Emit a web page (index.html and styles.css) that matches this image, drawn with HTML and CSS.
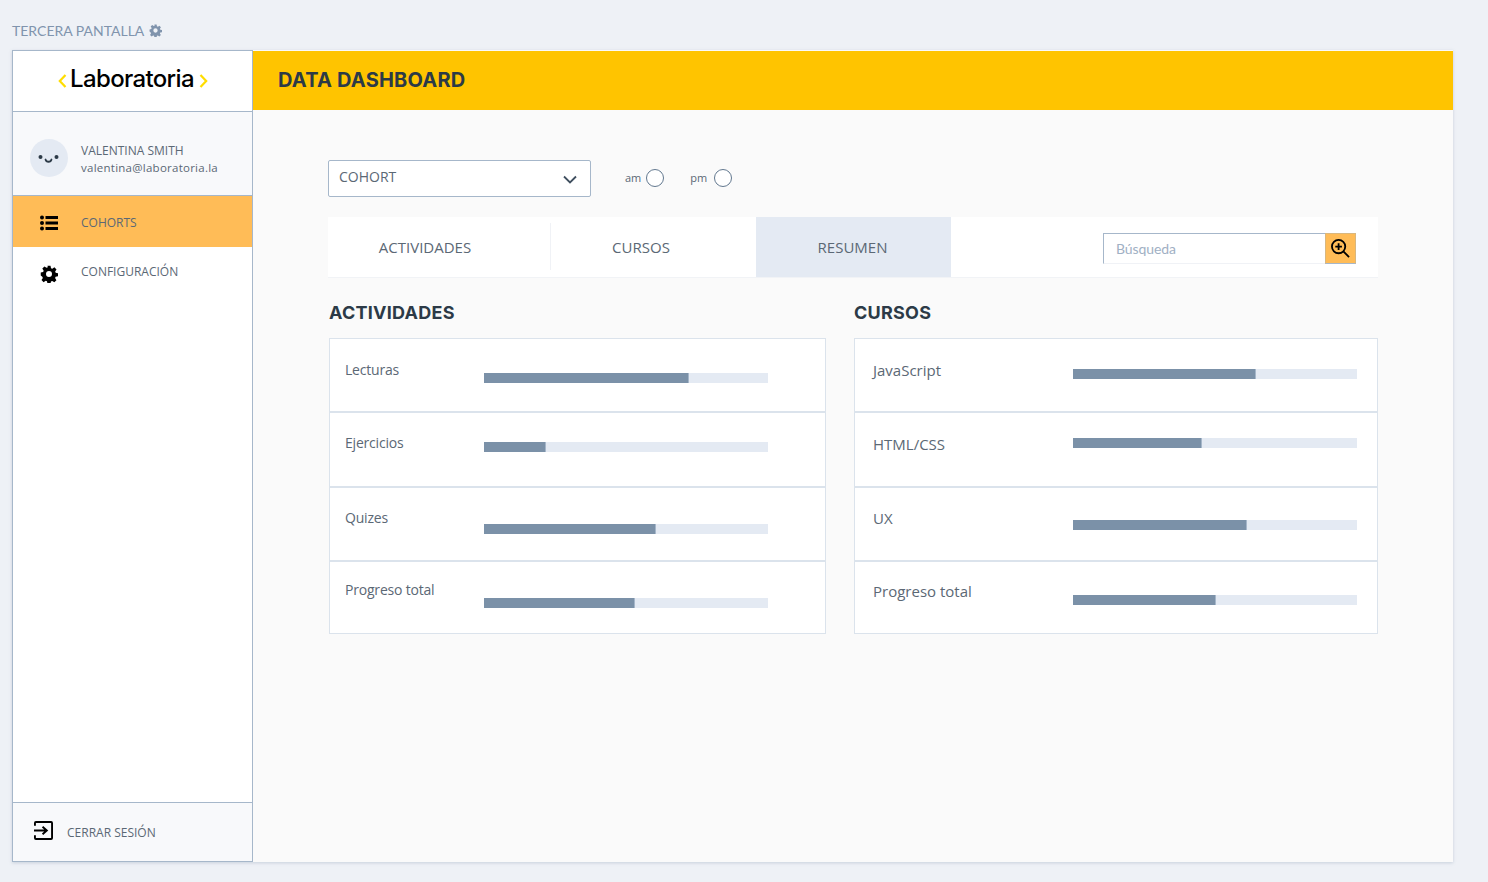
FILE: index.html
```html
<!DOCTYPE html>
<html lang="es">
<head>
    <meta charset="UTF-8">
    <title>Data Dashboard</title>
    <link rel="stylesheet" href="styles.css">
</head>
<body>
    <p class="screen-title">TERCERA PANTALLA
        <svg class="screen-gear" viewBox="0 0 24 24"><use href="#gear"/></svg>
    </p>
    <svg class="defs" width="0" height="0">
        <symbol id="gear" viewBox="0 0 24 24">
            <path fill-rule="evenodd" d="M10 1h4l.7 3.2 1.7.7 2.8-1.8 2.8 2.8-1.8 2.8.7 1.7 3.1.6v4l-3.2.7-.7 1.7 1.8 2.8-2.8 2.8-2.8-1.8-1.7.7-.6 3.1h-4l-.7-3.2-1.7-.7-2.8 1.8-2.8-2.8 1.8-2.8-.7-1.7L1 14v-4l3.200-.7.7-1.700-1.800-2.800 2.800-2.800 2.800 1.800 1.700-.7zM12 8a4 4 0 1 0 0 8 4 4 0 0 0 0-8z"/>
        </symbol>
    </svg>
    <div class="frame">
        <aside class="sidebar">
            <div class="logo">
                <svg class="logo-mark" viewBox="0 0 9 14" fill="none" stroke="#ffdd00" stroke-width="2.200"><path d="M7.500 1L1.800 7l5.700 6"/></svg>
                Laboratoria
                <svg class="logo-mark logo-mark-right" viewBox="0 0 9 14" fill="none" stroke="#ffdd00" stroke-width="2.200"><path d="M1.500 1l5.700 6-5.700 6"/></svg>
            </div>
            <div class="profile">
                <svg class="avatar" viewBox="0 0 38 38">
                    <circle cx="19" cy="19" r="19" fill="#e4eaf3"/>
                    <circle cx="10.500" cy="18" r="2" fill="#2c3a47"/>
                    <circle cx="26.500" cy="18" r="2" fill="#2c3a47"/>
                    <path d="M15.500 20.500c.8 3 5.200 3 6 0" fill="none" stroke="#2c3a47" stroke-width="1.800" stroke-linecap="round"/>
                </svg>
                <div class="profile-text">
                    <div>VALENTINA SMITH</div>
                    <div class="profile-mail">valentina@laboratoria.la</div>
                </div>
            </div>
            <nav class="menu">
                <a class="menu-item menu-active">
                    <svg class="menu-icon" viewBox="0 0 18 16">
                        <circle cx="2" cy="2.500" r="2"/><circle cx="2" cy="8" r="2"/><circle cx="2" cy="13.500" r="2"/>
                        <rect x="5.500" y="1" width="12.500" height="3"/><rect x="5.500" y="6.500" width="12.500" height="3"/><rect x="5.500" y="12" width="12.500" height="3"/>
                    </svg>
                    COHORTS
                </a>
                <a class="menu-item menu-config">
                    <svg class="menu-icon" viewBox="0 0 24 24"><use href="#gear"/></svg>
                    CONFIGURACIÓN
                </a>
            </nav>
            <a class="logout">
                <svg class="logout-icon" viewBox="0 0 20 20" fill="none" stroke="#000" stroke-width="2">
                    <path d="M1 5V2a1 1 0 0 1 1-1h16a1 1 0 0 1 1 1v16a1 1 0 0 1-1 1H2a1 1 0 0 1-1-1v-3"/>
                    <path d="M0 10h13M9 6l4.500 4L9 14"/>
                </svg>
                CERRAR SESIÓN
            </a>
        </aside>
        <main class="main">
            <header class="topbar">DATA DASHBOARD</header>
            <div class="content">
                <div class="filters">
                    <div class="select">COHORT
                        <svg class="chevron" viewBox="0 0 14 9" fill="none" stroke="#3f4f5f" stroke-width="1.800"><path d="M1 1.500l6 6 6-6"/></svg>
                    </div>
                    <label class="radio radio-am">am <span class="radio-dot"></span></label>
                    <label class="radio radio-pm">pm <span class="radio-dot"></span></label>
                </div>
                <div class="tabs">
                    <div class="tab tab-first">ACTIVIDADES</div>
                    <div class="tab tab-second">CURSOS</div>
                    <div class="tab tab-active">RESUMEN</div>
                    <div class="search">
                        <div class="search-input">Búsqueda</div>
                        <div class="search-btn">
                            <svg viewBox="0 0 20 20" width="19" height="19" fill="none" stroke="#000" stroke-width="1.900">
                                <circle cx="8" cy="8" r="7"/>
                                <path d="M13 13l6 6M8 4.500v7M4.500 8h7"/>
                            </svg>
                        </div>
                    </div>
                </div>
                <div class="panels">
                    <section class="panel">
                        <h3 class="panel-title">ACTIVIDADES</h3>
                        <div class="card">
                            <div class="row row-1"><span class="row-label">Lecturas</span><div class="bar"><div class="bar-fill" style="width: 72.2%"></div></div></div>
                            <div class="row row-2"><span class="row-label">Ejercicios</span><div class="bar"><div class="bar-fill" style="width: 21.8%"></div></div></div>
                            <div class="row row-3"><span class="row-label">Quizes</span><div class="bar"><div class="bar-fill" style="width: 60.6%"></div></div></div>
                            <div class="row row-4"><span class="row-label">Progreso total</span><div class="bar"><div class="bar-fill" style="width: 53.2%"></div></div></div>
                        </div>
                    </section>
                    <section class="panel panel-courses">
                        <h3 class="panel-title">CURSOS</h3>
                        <div class="card">
                            <div class="row row-1"><span class="row-label">JavaScript</span><div class="bar"><div class="bar-fill" style="width: 64.4%"></div></div></div>
                            <div class="row row-2"><span class="row-label">HTML/CSS</span><div class="bar"><div class="bar-fill" style="width: 45.4%"></div></div></div>
                            <div class="row row-3"><span class="row-label">UX</span><div class="bar"><div class="bar-fill" style="width: 61.3%"></div></div></div>
                            <div class="row row-4"><span class="row-label">Progreso total</span><div class="bar"><div class="bar-fill" style="width: 50.4%"></div></div></div>
                        </div>
                    </section>
                </div>
            </div>
        </main>
    </div>
</body>
</html>
```

FILE: styles.css
```css
/* General reset */
* {
    margin: 0;
    padding: 0;
    box-sizing: border-box;
}

body {
    height: 882px;
    overflow: hidden;
    padding: 21px 35px 0 12px;
    background: #eef1f6;
    font-family: "Open Sans", sans-serif;
    color: #5b6875;
}

.defs {
    display: block;
}

.screen-title {
    display: flex;
    align-items: center;
    gap: 5px;
    height: 18px;
    font-family: Lato, sans-serif;
    font-size: 14px;
    color: #8094ad;
}

.screen-gear {
    width: 13px;
    height: 13px;
    fill: #8094ad;
}

/* Frame */
.frame {
    display: flex;
    height: 812px;
    margin-top: 11px;
    box-shadow: 0 1px 3px rgba(128, 148, 173, 0.35);
}

/* Sidebar */
.sidebar {
    display: flex;
    flex-direction: column;
    width: 241px;
    flex: none;
    background: #fff;
    border: 1px solid #a6b7ca;
}

.logo {
    display: flex;
    align-items: center;
    justify-content: center;
    gap: 3px;
    height: 61px;
    padding: 0 0 6px 1px;
    border-bottom: 1px solid #a6b7ca;
    font-family: Inter, sans-serif;
    font-weight: 500;
    font-size: 24px;
    letter-spacing: -0.65px;
    color: #000;
}

.logo-mark {
    width: 9px;
    height: 14px;
    margin-top: 6px;
}

.logo-mark-right {
    margin-left: 2px;
}

.profile {
    display: flex;
    align-items: center;
    height: 84px;
    padding: 8px 0 0 17px;
    background: #f8f9fb;
    border-bottom: 1px solid #a6b7ca;
    font-size: 12px;
    line-height: 18px;
}

.avatar {
    width: 38px;
    height: 38px;
    margin-right: 13px;
}

.profile-text {
    margin-top: 4px;
}

.profile-mail {
    margin-top: -1px;
    font-size: 11.500px;
    letter-spacing: 0.25px;
}

.menu {
    flex: 1;
}

.menu-item {
    display: flex;
    align-items: center;
    height: 51px;
    padding-left: 27px;
    font-size: 12px;
}

.menu-active {
    padding-top: 2px;
    background: #ffbc57;
}

.menu-config {
    padding-bottom: 2px;
}

.menu-icon {
    width: 18px;
    height: 18px;
    margin-right: 23px;
    fill: #000;
}

.menu-config .menu-icon {
    margin-top: 5px;
}

.logout {
    display: flex;
    align-items: center;
    height: 59px;
    padding: 1px 0 0 21px;
    background: #f8f9fb;
    border-top: 1px solid #a6b7ca;
    font-size: 12px;
}

.logout-icon {
    width: 19px;
    height: 19px;
    margin: -4px 14px 0 0;
}

/* Main area */
.main {
    flex: 1;
    background: #fafafa;
}

.topbar {
    height: 59px;
    margin-top: 1px;
    padding: 0 25px;
    background: #ffc400;
    font-family: Inter, sans-serif;
    font-weight: 700;
    font-size: 20px;
    letter-spacing: 0.2px;
    line-height: 59px;
    color: #2c3a47;
}

.content {
    padding: 50px 75px 0;
}

.filters {
    display: flex;
    align-items: center;
    height: 37px;
}

.select {
    display: flex;
    align-items: center;
    justify-content: space-between;
    width: 263px;
    height: 37px;
    padding: 0 13px 4px 10px;
    background: #fff;
    border: 1px solid #a6b7ca;
    border-radius: 2px;
    font-size: 14px;
}

.chevron {
    width: 14px;
    height: 9px;
    margin-top: 6px;
}

.radio {
    display: flex;
    align-items: center;
    gap: 5px;
    margin-left: 26px;
    padding-bottom: 2px;
    font-size: 11px;
}

.radio-am {
    margin-left: 34px;
}

.radio-pm {
    gap: 7px;
}

.radio-dot {
    width: 18px;
    height: 18px;
    border: 1.500px solid #62788f;
    border-radius: 50%;
    background: #fff;
}

/* Tabs */
.tabs {
    display: flex;
    align-items: stretch;
    width: 1050px;
    height: 61px;
    margin-top: 20px;
    background: #fff;
    border-bottom: 1px solid #f1f3f6;
}

.tab {
    display: flex;
    align-items: center;
    justify-content: center;
    font-size: 15px;
}

.tab-first {
    width: 223px;
    margin: 6px 0 7px;
    padding: 1px 28px 0 0;
    border-right: 1px solid #f0f2f6;
}

.tab-second {
    width: 205px;
    margin: 6px 0 7px;
    padding: 1px 25px 0 0;
}

.tab-active {
    width: 195px;
    padding: 0 2px 0 0;
    background: #e4eaf3;
}

.search {
    display: flex;
    width: 253px;
    height: 31px;
    margin: 16px 0 0 152px;
}

.search-input {
    flex: 1;
    padding: 0 12px;
    border: 1px solid #a6b7ca;
    border-right: 0;
    border-bottom: 1px solid #f0f2f6;
    font-family: Lato, sans-serif;
    font-size: 14px;
    letter-spacing: -0.1px;
    line-height: 29px;
    color: #9fb0c4;
}

.search-btn {
    display: flex;
    align-items: center;
    justify-content: center;
    width: 31px;
    background: #ffbc57;
    border: 1px solid #d9b77e;
    border-bottom: 1px solid #a6b7ca;
}

/* Panels */
.panels {
    display: flex;
    gap: 28px;
    margin-top: 23px;
    padding-left: 1px;
}

.panel {
    width: 497px;
}

.panel-courses {
    width: 524px;
}

.panel-title {
    height: 37px;
    font-family: Inter, sans-serif;
    font-weight: 700;
    font-size: 18px;
    letter-spacing: 0.25px;
    line-height: 23px;
    color: #2c3a47;
}

.card {
    background: #fff;
    border: 1px solid #dbe3ec;
}

.row {
    display: flex;
    align-items: flex-start;
    height: 74px;
    padding-left: 15px;
    border-bottom: 2px solid #dbe3ec;
    font-size: 14px;
    letter-spacing: -0.2px;
}

.row-2 {
    height: 75px;
}

.row-4 {
    height: 71px;
    border-bottom: 0;
}

.row-label {
    width: 139px;
    flex: none;
    margin-top: 21px;
}

.row-2 .row-label { margin-top: 20px; }
.row-3 .row-label { margin-top: 20px; }
.row-4 .row-label { margin-top: 18px; }

.bar {
    width: 284px;
    height: 10px;
    background: #e4eaf3;
}

.bar-fill {
    height: 100%;
    background: #7b91a8;
    border-right: 1px solid #a6b7ca;
}

.row-1 .bar { margin-top: 34px; }
.row-2 .bar { margin-top: 29px; }
.row-3 .bar { margin-top: 36px; }
.row-4 .bar { margin-top: 36px; }

.panel-courses .row {
    padding-left: 18px;
    font-size: 15px;
    letter-spacing: 0;
}

.panel-courses .row-label {
    width: 200px;
    margin-top: 21px;
}

.panel-courses .row-3 .row-label { margin-top: 20px; }
.panel-courses .row-4 .row-label { margin-top: 19px; }

.panel-courses .row-1 .bar { margin-top: 30px; }
.panel-courses .row-2 .bar { margin-top: 25px; }
.panel-courses .row-3 .bar { margin-top: 32px; }
.panel-courses .row-4 .bar { margin-top: 33px; }
```
